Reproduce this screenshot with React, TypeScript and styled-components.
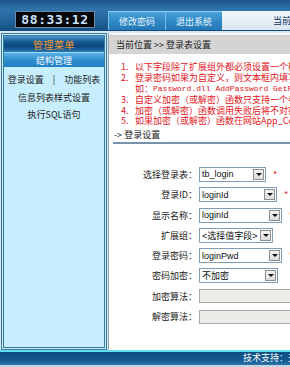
import React from "react";
import styled, {createGlobalStyle} from "styled-components";

const GlobalStyle = createGlobalStyle`
body {
  margin: 0;
  overflow: hidden;
  font-family: "Noto Sans CJK SC", "Liberation Sans", sans-serif;
  font-size: 9px;
  background: #ffffff;
}
`

const Page = styled.div`
width: 290px;
height: 367px;
display: flex;
flex-direction: column;
overflow: hidden;
`

const Header = styled.div`
height: 31px;
flex-shrink: 0;
display: flex;
background: linear-gradient(180deg, #1c5587 0%, #2f74ab 30%, #21639a 70%, #134c7c 100%);
`

const ClockZone = styled.div`
width: 108px;
flex-shrink: 0;
padding: 11px 0 0 15px;
box-sizing: border-box;
`

const Clock = styled.div`
width: 80px;
height: 17px;
box-sizing: border-box;
background: #05070a;
border: 1px solid #6f8aa6;
color: #c9e2ff;
font-family: "DejaVu Sans Mono", monospace;
font-weight: bold;
font-size: 13px;
line-height: 15px;
text-align: center;
letter-spacing: 0.6px;
`

const TabStrip = styled.div`
flex: 1;
min-width: 0;
align-self: flex-end;
height: 19px;
margin-bottom: 1px;
display: flex;
`

const Tab = styled.div<{ w: number }>`
width: ${({w}) => w}px;
flex-shrink: 0;
box-sizing: border-box;
border-left: 1px solid #7cc0ea;
border-top: 1px solid #8fd0f4;
background: linear-gradient(180deg, #4aa0d8 0%, #2d86c4 60%, #2678b6 100%);
color: #eaf6ff;
display: flex;
align-items: center;
justify-content: center;
`

const TabFill = styled.div`
flex: 1;
min-width: 0;
background: linear-gradient(180deg, #f2f7fb 0%, #d9e6f0 100%);
color: #12335a;
padding-left: 51px;
white-space: nowrap;
overflow: hidden;
line-height: 19px;
`

const Divider = styled.div`
height: 2px;
flex-shrink: 0;
background: #d5e6f1;
`

const Body = styled.div`
flex: 1;
display: flex;
min-height: 0;
`

const Sidebar = styled.div`
width: 108px;
flex-shrink: 0;
padding: 0 1px 0 1px;
box-sizing: border-box;
background: #cfe9f6;
`

const SideFrame = styled.div`
height: 100%;
box-sizing: border-box;
border: 1px solid #3d7b9d;
padding: 1px;
background: #c7eefd;
`

const SideInner = styled.div`
height: 100%;
box-sizing: border-box;
border: 1px solid #3d7b9d;
display: flex;
flex-direction: column;
`

const SideTitle = styled.div`
height: 16px;
background: linear-gradient(180deg, #4d9bd2 0%, #155b94 35%, #0b467c 65%, #2a79b4 100%);
color: #f59a2e;
font-size: 10px;
display: flex;
align-items: center;
justify-content: center;
letter-spacing: 0.5px;
`

const SideSub = styled.div`
height: 14px;
border-top: 1px solid #9ad8f6;
background: linear-gradient(180deg, #58b2e6 0%, #2f8ccd 50%, #2280c3 100%);
color: #f4fbff;
display: flex;
align-items: center;
justify-content: center;
`

const MenuList = styled.div`
padding-top: 4px;
display: flex;
flex-direction: column;
`

const MenuItem = styled.div`
height: 17.5px;
display: flex;
align-items: center;
justify-content: center;
color: #1c1c1c;
gap: 9px;
`

const Main = styled.div`
flex: 1;
min-width: 0;
border-left: 1px solid #9aa4ac;
background: #ffffff;
display: flex;
flex-direction: column;
padding-top: 1px;
overflow: hidden;
`

const Crumb = styled.div`
height: 20px;
flex-shrink: 0;
box-sizing: border-box;
border-top: 1px solid #ececec;
background: #d4d4d4;
color: #222;
padding-left: 7px;
line-height: 19px;
white-space: nowrap;
`

const Notes = styled.div`
padding: 8px 0 0 12px;
color: #e3141b;
white-space: nowrap;
`

const NoteLine = styled.div`
height: 10.9px;
line-height: 10.9px;
display: flex;
`

const NoteNum = styled.span`
width: 14px;
flex-shrink: 0;
`

const Mono = styled.span`
font-family: "Liberation Mono", monospace;
font-size: 8px;
`

const Section = styled.div`
margin: 2px 0 0 4px;
height: 13px;
line-height: 11px;
border-bottom: 2px solid #7893ad;
color: #222;
padding-left: 1px;
white-space: nowrap;
`

const Form = styled.div`
padding-top: 20px;
display: flex;
flex-direction: column;
`

const Row = styled.div`
height: 20.3px;
display: grid;
grid-template-columns: 88px auto;
column-gap: 2px;
align-items: center;
white-space: nowrap;
`

const Label = styled.div`
text-align: right;
color: #222;
`

const Field = styled.div`
display: flex;
align-items: center;
gap: 7px;
`

const SelectBox = styled.div<{ w: number }>`
width: ${({w}) => w}px;
height: 15px;
box-sizing: border-box;
border: 1px solid #7f9db9;
background: #fff;
display: flex;
align-items: center;
font-family: "Liberation Sans", "Noto Sans CJK SC", sans-serif;
font-size: 9px;
color: #111;
padding-left: 2px;
`

const SelectText = styled.span`
flex: 1;
min-width: 0;
overflow: hidden;
`

const ArrowBtn = styled.span`
width: 11px;
height: 11px;
flex-shrink: 0;
margin-right: 1px;
box-sizing: border-box;
border: 1px solid #8e8e8e;
background: linear-gradient(180deg, #f4f4f4 0%, #dcdcdc 100%);
display: flex;
align-items: center;
justify-content: center;
&::after {
  content: "";
  border-left: 3px solid transparent;
  border-right: 3px solid transparent;
  border-top: 3px solid #111;
}
`

const Star = styled.span`
color: #e3141b;
font-size: 9px;
`

const TextBox = styled.div`
width: 100px;
height: 14px;
box-sizing: border-box;
border: 1px solid #a9a9a9;
background: #ecebe6;
`

const Footer = styled.div`
height: 17px;
flex-shrink: 0;
box-sizing: border-box;
border-top: 2px solid #5fe0f2;
border-bottom: 2px solid #c9d6de;
background: linear-gradient(180deg, #0e4d80 0%, #14598f 60%, #2a73ab 100%);
color: #ffffff;
padding-left: 243px;
line-height: 12px;
white-space: nowrap;
overflow: hidden;
`

const selects = [
    {label: '选择登录表：', value: 'tb_login', w: 67, star: true},
    {label: '登录ID：', value: 'loginId', w: 78, star: true},
    {label: '显示名称：', value: 'loginId', w: 83, star: true},
    {label: '扩展组：', value: '<选择值字段>', w: 74, star: false},
    {label: '登录密码：', value: 'loginPwd', w: 83, star: true},
    {label: '密码加密：', value: '不加密', w: 79, star: false},
]

const App = () => {
    return <Page>
        <GlobalStyle/>
        <Header>
            <ClockZone>
                <Clock>88:33:12</Clock>
            </ClockZone>
            <TabStrip>
                <Tab w={57}>修改密码</Tab>
                <Tab w={57}>退出系统</Tab>
                <TabFill>当前用户：admin</TabFill>
            </TabStrip>
        </Header>
        <Divider/>
        <Body>
            <Sidebar>
                <SideFrame>
                    <SideInner>
                        <SideTitle>管理菜单</SideTitle>
                        <SideSub>结构管理</SideSub>
                        <MenuList>
                            <MenuItem><span>登录设置</span><span>|</span><span>功能列表</span></MenuItem>
                            <MenuItem>信息列表样式设置</MenuItem>
                            <MenuItem>执行SQL语句</MenuItem>
                        </MenuList>
                    </SideInner>
                </SideFrame>
            </Sidebar>
            <Main>
                <Crumb>当前位置 &gt;&gt; 登录表设置</Crumb>
                <Notes>
                    <NoteLine><NoteNum>1.</NoteNum>以下字段除了扩展组外都必须设置一个检测值</NoteLine>
                    <NoteLine><NoteNum>2.</NoteNum>登录密码如果为自定义，则文本框内填写</NoteLine>
                    <NoteLine><NoteNum/>如：<Mono>Password.dll AddPassword GetPassword</Mono></NoteLine>
                    <NoteLine><NoteNum>3.</NoteNum>自定义加密（或解密）函数只支持一个参数</NoteLine>
                    <NoteLine><NoteNum>4.</NoteNum>加密（或解密）函数调用失败后将不对密码</NoteLine>
                    <NoteLine><NoteNum>5.</NoteNum>如果加密（或解密）函数在网站App_Code中</NoteLine>
                </Notes>
                <Section>-&gt; 登录设置</Section>
                <Form>
                    {selects.map((s, key) => <Row key={key}>
                        <Label>{s.label}</Label>
                        <Field>
                            <SelectBox w={s.w}>
                                <SelectText>{s.value}</SelectText>
                                <ArrowBtn/>
                            </SelectBox>
                            {s.star && <Star>*</Star>}
                        </Field>
                    </Row>)}
                    <Row>
                        <Label>加密算法：</Label>
                        <Field><TextBox/></Field>
                    </Row>
                    <Row>
                        <Label>解密算法：</Label>
                        <Field><TextBox/></Field>
                    </Row>
                </Form>
            </Main>
        </Body>
        <Footer>技术支持：天网科技</Footer>
    </Page>
}

export default App
